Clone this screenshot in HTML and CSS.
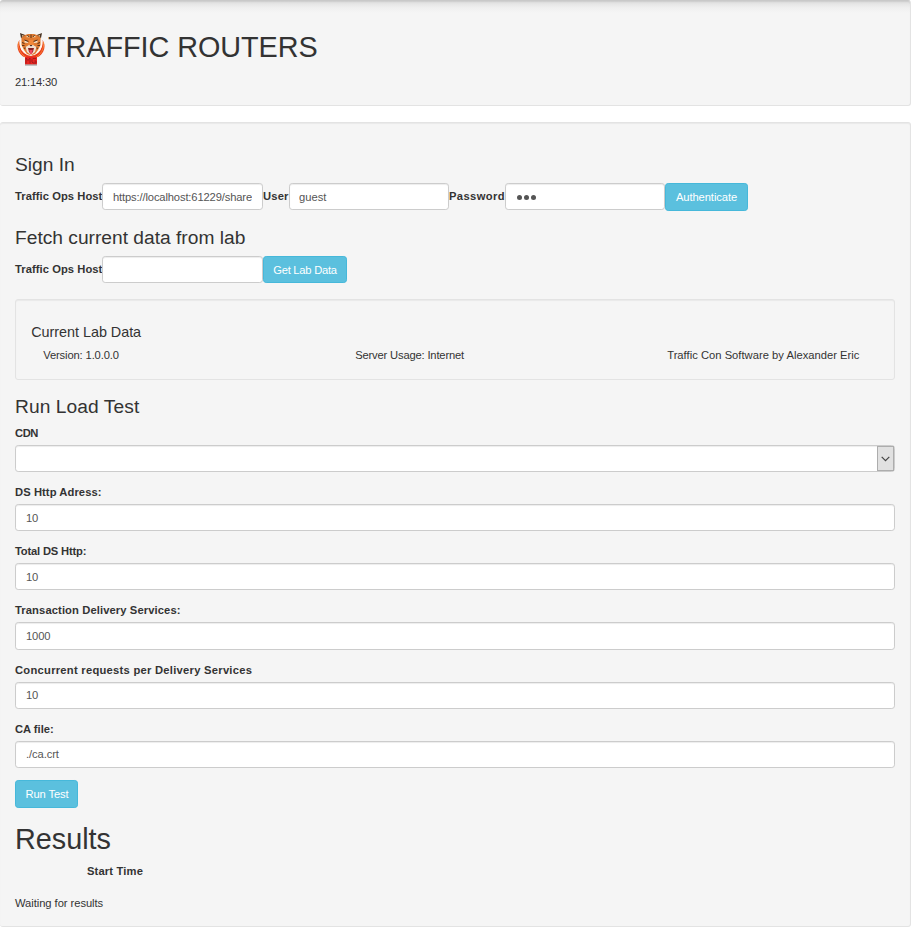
FILE: index.html
```html
<!DOCTYPE html>
<html lang="en">
<head>
<meta charset="utf-8">
<title>Traffic Routers</title>
<link rel="stylesheet" href="styles.css">
</head>
<body>
<header class="well top">
  <h1 class="brand">
    <svg class="logo" viewBox="0 0 28 34" aria-hidden="true">
      <path d="M2.500 8C-1 13 0 20 6 24.500l4 1.500h8l4-1.500c6-4.500 7-11.500 3.500-16.500.5 8-3.500 14-11.500 16C6 22 2 17 2.500 8z" fill="#ea3a1c"/>
      <path d="M1.500 10c-1 7 3 13 8 15.500M26.500 10c1 7-3 13-8 15.500" fill="none" stroke="#f79a3c" stroke-width=".8"/>
      <path d="M3.500 9c-.5 7 3 12 8 13.500M24.500 9c.5 7-3 12-8 13.500" fill="none" stroke="#fff6ea" stroke-width="2"/>
      <path d="M4 2l4 1 3-1h6l3 1 4-1-.5 6 0 5-2.500 5-3 4-3 1h-2l-3-1-3-4-2.500-5v-5z" fill="#e07a30"/>
      <path d="M3 1l5 2-4 3zM25 1l-5 2 4 3z" fill="#4a3626"/>
      <path d="M5 3l2 .5-2 1.500zM23 3l-2 .5 2 1.500z" fill="#e7b98a"/>
      <path d="M8.500 5l3-1.500 1 2zM19.500 5l-3-1.500-1 2z" fill="#f3d2a4"/>
      <path d="M10.500 3l1.500 2M14 2.500v3.500M17.500 3l-1.500 2M5 10.500l2.500 1M5 13.500h2.500M23 10.500l-2.500 1M23 13.500h-2.500M7 16.500l2-1M21 16.500l-2-1" stroke="#4a2c18" stroke-width=".9"/>
      <path d="M7.500 8.500l4 1.500-1 1-3-.5zM20.500 8.500l-4 1.500 1 1 3-.5z" fill="#f3e3cc"/>
      <path d="M7.500 8l4 1.500M20.500 8l-4 1.500" stroke="#3a2418" stroke-width=".9"/>
      <path d="M12 8h4l1 6h-6z" fill="#f2883a"/>
      <path d="M8.500 15l3.500-2h4l3.500 2-1.500 5-4 3-4-3z" fill="#f3e0d0"/>
      <path d="M12.500 13h3l-1.500 1.500z" fill="#39201a"/>
      <path d="M11 16h6l-1 4-2 2-2-2z" fill="#8a2222"/>
      <path d="M12.300 18h3.400l-.7 3.500-1 .8-1-.8z" fill="#f04860"/>
      <path d="M8 25h12v7.500H8z" fill="#ea2420"/>
      <path d="M9 31.500v-5.500l2 2.500 2-2.500v5.500M19 26.500h-3l-1 1v2.500l1 1h3v-2h-1.500" fill="none" stroke="#9c1c1c" stroke-width=".9"/>
      <path d="M8 33h12" stroke="#777" stroke-width=".8"/>
    </svg><span class="brand-name">TRAFFIC ROUTERS</span>
  </h1>
  <div class="clock">21:14:30</div>
</header>

<main class="well">
  <h3>Sign In</h3>
  <form class="inline">
    <label class="host">Traffic Ops Host</label>
    <input class="field host-field" type="text" value="https://localhost:61229/share">
    <label class="user">User</label>
    <input class="field guest" type="text" value="guest">
    <label class="pass">Password</label>
    <div class="field dots"><i></i><i></i><i></i></div>
    <button class="btn auth" type="button">Authenticate</button>
  </form>

  <h3 class="t-fetch">Fetch current data from lab</h3>
  <form class="inline">
    <label class="host">Traffic Ops Host</label>
    <input class="field host-field" type="text">
    <button class="btn lab" type="button">Get Lab Data</button>
  </form>

  <section class="well inner">
    <h4>Current Lab Data</h4>
    <div class="facts">
      <span class="version">Version: 1.0.0.0</span>
      <span class="usage">Server Usage: Internet</span>
      <span class="credit">Traffic Con Software by Alexander Eric</span>
    </div>
  </section>

  <h3 class="t-run">Run Load Test</h3>
  <form>
    <div class="group">
      <label class="cdn">CDN</label>
      <div class="field select"><span class="arrow"><svg viewBox="0 0 9 6"><path d="M.7.8l3.800 3.800L8.300.8" fill="none" stroke="#444" stroke-width="1.200"/></svg></span></div>
    </div>
    <div class="group"><label class="address">DS Http Adress:</label><input class="field" type="text" value="10"></div>
    <div class="group"><label class="total">Total DS Http:</label><input class="field" type="text" value="10"></div>
    <div class="group"><label class="transaction">Transaction Delivery Services:</label><input class="field raised" type="text" value="1000"></div>
    <div class="group"><label class="concurrent">Concurrent requests per Delivery Services</label><input class="field raised" type="text" value="10"></div>
    <div class="group"><label>CA file:</label><input class="field raised" type="text" value="./ca.crt"></div>
    <button class="btn run" type="button">Run Test</button>
  </form>

  <h1 class="results">Results</h1>
  <div class="start">Start Time</div>
  <div class="waiting">Waiting for results</div>
</main>
</body>
</html>
```
FILE: styles.css
```css
* { box-sizing: border-box; }
html { overflow: hidden; }
body {
  margin: 0;
  background: #fff;
  color: #333;
  font: 11.2px/16px "Liberation Sans", Arial, sans-serif;
}
h1, h3, h4 { margin: 16px 0 8px; font-weight: 400; line-height: 1.1; color: #333; }
h1 { font-size: 28.8px; }
h3 { font-size: 19.2px; }
h4 { font-size: 14.4px; margin: 10px 0 6px; letter-spacing: -.03px; }
.well {
  display: flow-root;
  padding: 15.2px;
  margin-bottom: 16px;
  background: #f5f5f5;
  border: 1px solid #e3e3e3;
  border-radius: 3px;
  box-shadow: inset 0 1px 1px rgba(0, 0, 0, .05);
}
main.well { padding: 15.2px 15px; margin-bottom: 0; border-left: 0; }
.top {
  height: 106px;
  padding-left: 15px;
  border-left: 0;
  border-top-color: #c9c9c9;
  background: linear-gradient(#d8d8d8, #e6e6e6 3px, #f0f0f0 7px, #f5f5f5 12px);
}
.brand { display: flex; height: 33.6px; }
.logo { width: 28px; height: 34px; margin: 0 3px 0 2px; flex: none; }
.brand-name { letter-spacing: -.05px; }
.clock { letter-spacing: -.2px; }
.inline { display: flex; height: 27.2px; }
label { display: block; font-weight: 700; white-space: nowrap; }
.inline label { padding-top: 5px; flex: none; }
.host { width: 87px; letter-spacing: .06px; }
.user { width: 26px; letter-spacing: .2px; }
.pass { width: 56px; letter-spacing: .38px; }
.cdn { letter-spacing: -.4px; }
.address { letter-spacing: .08px; }
.total { letter-spacing: -.18px; }
.transaction { letter-spacing: .11px; }
.concurrent { letter-spacing: .265px; }
.field {
  display: block;
  width: 100%;
  height: 27.2px;
  margin: 0;
  padding: 1px 10px 0;
  border: 1px solid #ccc;
  border-radius: 3.2px;
  background: #fff;
  color: #555;
  font: inherit;
  letter-spacing: -.1px;
  box-shadow: inset 0 1px 1px rgba(0, 0, 0, .075);
}
.raised { padding-top: 0; }
.inline .field { flex: none; width: 160px; }
.inline .host-field { width: 161px; letter-spacing: -.14px; }
.inline .guest { padding-left: 9px; letter-spacing: 0; }
.inline .dots { display: flex; align-items: center; gap: 2px; padding: 2px 0 0 11px; }
.dots i { width: 5px; height: 5px; border-radius: 50%; background: #555; }
.btn {
  display: block;
  flex: none;
  height: 27.6px;
  margin: 0;
  padding: 1px 0 0;
  border: 1px solid #46b8da;
  border-radius: 3.2px;
  background: #5bc0de;
  color: #fff;
  font: inherit;
  text-align: center;
}
.auth { width: 83px; padding-top: 0; letter-spacing: -.08px; }
.lab { width: 84px; letter-spacing: -.25px; }
.run { width: 63px; padding-left: 1px; letter-spacing: -.1px; }
.t-fetch { position: relative; top: 1px; }
.t-run { letter-spacing: .07px; }
.inner { height: 81px; margin: 16px 0; background: transparent; }
.facts { display: grid; grid-template-columns: 312px 312px auto; padding-left: 12px; white-space: nowrap; }
.version { letter-spacing: -.13px; }
.usage { letter-spacing: -.17px; }
.credit { letter-spacing: .02px; }
.group { margin-bottom: 12px; }
.group label { margin-bottom: 4px; }
.select { display: flex; justify-content: flex-end; padding: 0; }
.arrow {
  display: flex;
  align-items: center;
  justify-content: center;
  width: 17px;
  padding-top: 1px;
  background: #e1e1e1;
  border: 1px solid #adadad;
}
.arrow svg { width: 9px; height: 6px; }
.start { padding-left: 72px; font-weight: 700; letter-spacing: .15px; }
.waiting { margin-top: 16px; letter-spacing: -.05px; }
```
